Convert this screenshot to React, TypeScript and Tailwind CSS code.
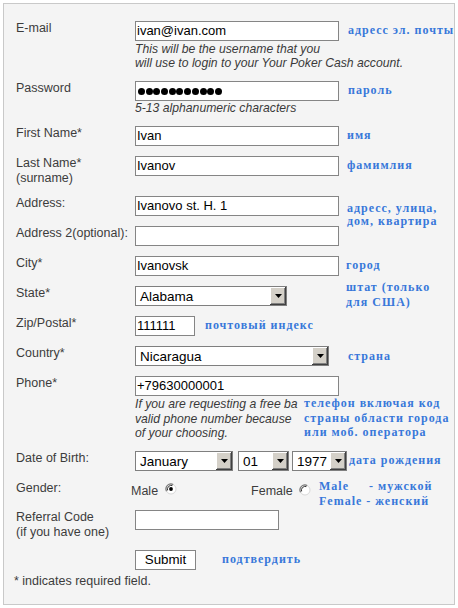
import React from "react";

const Note = ({ children, className = "" }: { children: React.ReactNode; className?: string }) => (
  <div
    className={
      "absolute whitespace-nowrap font-bold text-[12px] tracking-[1px] text-[#3878da] " + className
    }
    style={{ fontFamily: '"Liberation Serif", "Times New Roman", serif' }}
  >
    {children}
  </div>
);

const TextBox = ({ value = "", w }: { value?: string; w: string }) => (
  <div
    className={
      "h-[20px] border border-[#858585] bg-white pl-[1px] text-[13px] leading-[18px] text-black whitespace-nowrap overflow-hidden " +
      w
    }
  >
    {value}
  </div>
);

const Select = ({ value, w }: { value: string; w: string }) => (
  <div className={"flex h-[20px] border border-[#7f7f7f] bg-white " + w}>
    <div className="flex-1 pl-[4px] text-[13.5px] leading-[19px] text-black whitespace-nowrap overflow-hidden">
      {value}
    </div>
    <div className="flex h-[18px] w-[16px] items-center justify-center bg-[#d4d0c8] shadow-[inset_-1px_-1px_0_#404040,inset_1px_1px_0_#ffffff,inset_-2px_-2px_0_#808080]">
      <svg width="7" height="4" viewBox="0 0 7 4">
        <path d="M0 0H7L3.5 4Z" fill="#000" />
      </svg>
    </div>
  </div>
);

const Label = ({ children, w = "w-[119px]" }: { children: React.ReactNode; w?: string }) => (
  <div className={"shrink-0 text-[12.5px] leading-[15px] text-[#3c3c3c] " + w}>{children}</div>
);

const Hint = ({ children, className = "" }: { children: React.ReactNode; className?: string }) => (
  <div className={"italic text-[12.2px] text-[#3a3a3a] " + className}>{children}</div>
);

const Radio = ({ checked }: { checked?: boolean }) => (
  <svg width="12" height="12" viewBox="0 0 12 12">
    <circle cx="6" cy="6" r="5" fill="#ffffff" stroke="#d8d8d8" strokeWidth="1" />
    <path d="M1.5 8.2A5 5 0 0 1 8.2 1.5" fill="none" stroke="#7a7a7a" strokeWidth="1.2" />
    <path d="M2.6 7.4A3.8 3.8 0 0 1 7.4 2.6" fill="none" stroke="#333333" strokeWidth="1" />
    {checked && <circle cx="6" cy="6" r="1.9" fill="#000" />}
  </svg>
);

export default function App() {
  return (
    <div
      className="w-[458px] h-[608px] bg-white p-[3px]"
      style={{ fontFamily: '"Liberation Sans", Arial, sans-serif' }}
    >
      <div className="h-[602px] border border-[#c9c9c9] bg-[#f4f4f4] pl-[12px] pt-[17px]">
        {/* E-mail */}
        <div className="relative flex">
          <Label>E-mail</Label>
          <div>
            <TextBox value="ivan@ivan.com" w="w-[204px]" />
            <Hint className="mt-[1px] leading-[14px]">
              <div>This will be the username that you</div>
              <div>will use to login to your Your Poker Cash account.</div>
            </Hint>
          </div>
          <Note className="left-[332px] top-[2px] leading-[15px]">адресс эл. почты</Note>
        </div>

        {/* Password */}
        <div className="relative mt-[11px] flex">
          <Label>Password</Label>
          <div>
            <div className="flex h-[20px] w-[204px] items-center gap-[0.7px] border border-[#858585] bg-white pl-[2px]">
              {Array.from({ length: 11 }).map((_, i) => (
                <span key={i} className="h-[7px] w-[7px] rounded-full bg-black" />
              ))}
            </div>
            <Hint className="leading-[14px]">5-13 alphanumeric characters</Hint>
          </div>
          <Note className="left-[332px] top-[2px] leading-[15px]">пароль</Note>
        </div>

        {/* First Name */}
        <div className="relative mt-[11px] flex">
          <Label>First Name*</Label>
          <TextBox value="Ivan" w="w-[204px]" />
          <Note className="left-[331px] top-[2px] leading-[15px]">имя</Note>
        </div>

        {/* Last Name */}
        <div className="relative mt-[10px] flex">
          <Label>
            Last Name*
            <br />
            (surname)
          </Label>
          <TextBox value="Ivanov" w="w-[204px]" />
          <Note className="left-[331px] top-[2px] leading-[15px]">фамимлия</Note>
        </div>

        {/* Address */}
        <div className="relative mt-[10px] flex">
          <Label>Address:</Label>
          <TextBox value="Ivanovo st. H. 1" w="w-[204px]" />
          <Note className="left-[331px] top-[6px] leading-[13px]">
            адресс, улица,
            <br />
            дом, квартира
          </Note>
        </div>

        {/* Address 2 */}
        <div className="relative mt-[10px] flex">
          <Label>Address 2(optional):</Label>
          <TextBox w="w-[204px]" />
        </div>

        {/* City */}
        <div className="relative mt-[10px] flex">
          <Label>City*</Label>
          <TextBox value="Ivanovsk" w="w-[204px]" />
          <Note className="left-[330px] top-[2px] leading-[15px]">город</Note>
        </div>

        {/* State */}
        <div className="relative mt-[10px] flex">
          <Label>State*</Label>
          <Select value="Alabama" w="w-[152px]" />
          <Note className="left-[330px] top-[-6px] leading-[15px]">
            штат (только
            <br />
            для США)
          </Note>
        </div>

        {/* Zip */}
        <div className="relative mt-[10px] flex">
          <Label>Zip/Postal*</Label>
          <TextBox value="111111" w="w-[60px]" />
          <Note className="left-[189px] top-[2px] leading-[15px]">почтовый индекс</Note>
        </div>

        {/* Country */}
        <div className="relative mt-[10px] flex">
          <Label>Country*</Label>
          <Select value="Nicaragua" w="w-[194px]" />
          <Note className="left-[332px] top-[3px] leading-[15px]">страна</Note>
        </div>

        {/* Phone */}
        <div className="relative mt-[10px] flex">
          <Label>Phone*</Label>
          <div>
            <TextBox value="+79630000001" w="w-[204px]" />
            <Hint className="mt-[1px] w-[166px] overflow-hidden whitespace-nowrap leading-[14.5px]">
              <div>If you are requesting a free ba</div>
              <div>valid phone number because</div>
              <div>of your choosing.</div>
            </Hint>
          </div>
          <Note className="left-[288px] top-[20px] leading-[14.5px]">
            телефон включая код
            <br />
            страны области города
            <br />
            или моб. оператора
          </Note>
        </div>

        {/* Date of Birth */}
        <div className="relative mt-[10px] flex">
          <Label>Date of Birth:</Label>
          <div className="flex">
            <Select value="January" w="w-[98px]" />
            <div className="ml-[5px]">
              <Select value="01" w="w-[51px]" />
            </div>
            <div className="ml-[3px]">
              <Select value="1977" w="w-[55px]" />
            </div>
          </div>
          <Note className="left-[333px] top-[2px] leading-[15px]">дата рождения</Note>
        </div>

        {/* Gender */}
        <div className="relative mt-[10px] flex h-[19px]">
          <Label w="w-[115px]">Gender:</Label>
          <div className="flex items-start text-[12.5px] leading-[15px] text-[#3c3c3c]">
            <span className="mt-[3px]">Male</span>
            <span className="ml-[7px] mt-[2px]">
              <Radio checked />
            </span>
            <span className="ml-[74px] mt-[3px]">Female</span>
            <span className="ml-[6px] mt-[3px]">
              <Radio />
            </span>
          </div>
          <Note className="left-[303px] top-[-2px] leading-[15px]">
            Male&nbsp;&nbsp;&nbsp;&nbsp;&nbsp;- мужской
            <br />
            Female - женский
          </Note>
        </div>

        {/* Referral */}
        <div className="relative mt-[10px] flex">
          <Label>
            Referral Code
            <br />
            (if you have one)
          </Label>
          <TextBox w="w-[144px]" />
        </div>

        {/* Submit */}
        <div className="relative mt-[10px] flex">
          <div className="w-[119px] shrink-0" />
          <div className="flex h-[20px] w-[61px] items-center justify-center border border-[#858585] bg-white text-[13.3px] text-black">
            Submit
          </div>
          <Note className="left-[206px] top-[2px] leading-[15px]">подтвердить</Note>
        </div>

        <div className="ml-[-2px] mt-[4px] text-[12.5px] leading-[15px] text-[#3c3c3c]">
          * indicates required field.
        </div>
      </div>
    </div>
  );
}
